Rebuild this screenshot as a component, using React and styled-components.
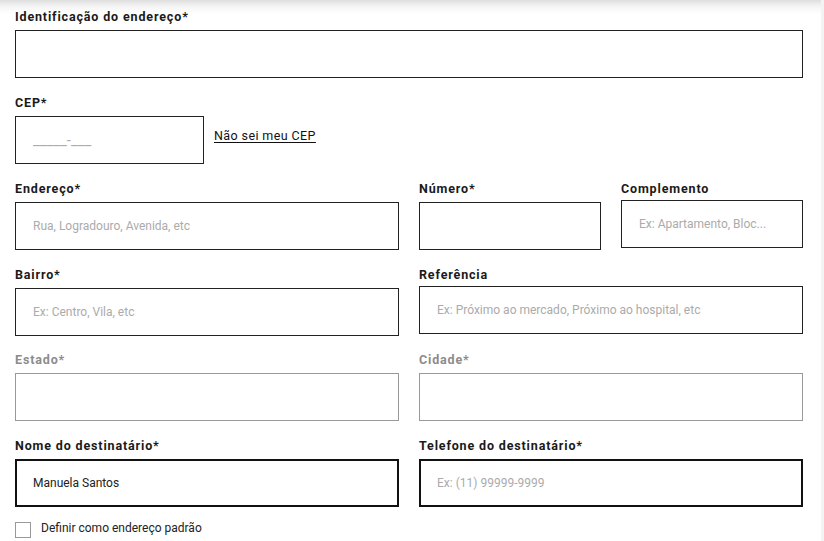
import React from "react";
import styled, { createGlobalStyle } from "styled-components";

const FONT = `Roboto, "Liberation Sans", Arial, sans-serif`;

const Global = createGlobalStyle`
  html, body { margin: 0; padding: 0; background: #fff; }
  body { font-family: ${FONT}; color: #1a1a1a; }
  * { box-sizing: border-box; }
`;

const Page = styled.div`
  display: grid;
  grid-template-columns: 821px 3px;
  width: 824px;
  height: 541px;
  overflow: hidden;
`;

const Scroll = styled.div`
  background: #f3f3f3;
`;

const Main = styled.div`
  background: linear-gradient(#dedede 0px, #f4f4f4 6px, #fff 14px);
  padding: 10px 18px 0 15px;
`;

const Form = styled.form`
  display: flex;
  flex-direction: column;
  gap: 18px;
  width: 788px;
`;

const Row = styled.div`
  display: grid;
  grid-template-columns: 1fr 1fr;
  column-gap: 20px;
  align-items: start;
  margin-top: ${(p) => (p.$pull ? "-1px" : "0")};
`;

const Split = styled.div`
  display: grid;
  grid-template-columns: 1fr 1fr;
  column-gap: 20px;
  align-items: start;
`;

const Field = styled.div`
  display: flex;
  flex-direction: column;
`;

const Label = styled.label`
  font-size: 12.5px;
  line-height: 13px;
  font-weight: 700;
  letter-spacing: 0.85px;
  color: ${(p) => (p.$disabled ? "#8c8c8c" : "#1a1a1a")};
  margin-bottom: ${(p) => (p.$required ? "7px" : "5px")};
`;

const Input = styled.input`
  display: block;
  width: ${(p) => p.$width || "100%"};
  height: 48px;
  margin: 0;
  padding: 0 17px;
  border: ${(p) =>
    p.$strong ? "2px solid #111" : p.disabled ? "1px solid #999" : "1px solid #222"};
  border-radius: 0;
  background: #fff;
  font-family: ${FONT};
  font-size: ${(p) => (p.$mask ? "15px" : "12px")};
  color: #222;
  outline: none;
  padding-left: ${(p) => (p.$strong ? "16px" : "17px")};
  &::placeholder {
    color: #ababab;
    opacity: 1;
  }
  &:disabled {
    background: #fff;
  }
`;

const CepLine = styled.div`
  display: flex;
  align-items: center;
  gap: 10px;
`;

const Link = styled.a`
  font-size: 12.5px;
  letter-spacing: 0.4px;
  color: #111;
  text-decoration: underline;
  text-underline-offset: 2px;
  padding-bottom: 9px;
  cursor: pointer;
`;

const CheckRow = styled.label`
  display: flex;
  align-items: center;
  gap: 10px;
  margin-top: -4px;
  font-size: 12px;
  line-height: 14px;
  color: #222;
`;

const CheckText = styled.span`
  padding-bottom: 3px;
`;

const Box = styled.span`
  width: 16px;
  height: 16px;
  border: 1px solid #999;
  background: #fff;
`;

function F({ label, required, disabled, strong, placeholder, value, width }) {
  return (
    <Field>
      <Label $required={required} $disabled={disabled}>
        {label}
        {required ? "*" : ""}
      </Label>
      <Input
        $strong={strong}
        $width={width}
        disabled={disabled}
        placeholder={placeholder}
        defaultValue={value}
      />
    </Field>
  );
}

export default function App() {
  return (
    <>
      <Global />
      <Page>
        <Main>
          <Form onSubmit={(e) => e.preventDefault()}>
            <F label="Identificação do endereço" required />
            <Field>
              <Label $required>CEP*</Label>
              <CepLine>
                <Input $width="189px" $mask placeholder="_____-___" />
                <Link>Não sei meu CEP</Link>
              </CepLine>
            </Field>
            <Row>
              <F label="Endereço" required placeholder="Rua, Logradouro, Avenida, etc" />
              <Split>
                <F label="Número" required />
                <F label="Complemento" placeholder="Ex: Apartamento, Bloc..." />
              </Split>
            </Row>
            <Row>
              <F label="Bairro" required placeholder="Ex: Centro, Vila, etc" />
              <F
                label="Referência"
                placeholder="Ex: Próximo ao mercado, Próximo ao hospital, etc"
              />
            </Row>
            <Row $pull>
              <F label="Estado" required disabled />
              <F label="Cidade" required disabled />
            </Row>
            <Row>
              <F label="Nome do destinatário" required strong value="Manuela Santos" />
              <F
                label="Telefone do destinatário"
                required
                strong
                placeholder="Ex: (11) 99999-9999"
              />
            </Row>
            <CheckRow>
              <Box />
              <CheckText>Definir como endereço padrão</CheckText>
            </CheckRow>
          </Form>
        </Main>
        <Scroll />
      </Page>
    </>
  );
}
